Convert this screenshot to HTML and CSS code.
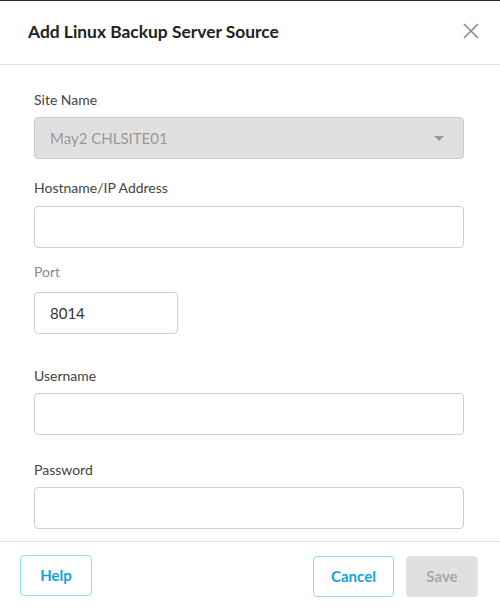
FILE: index.html
```html
<!DOCTYPE html>
<html lang="en">
<head>
  <meta charset="UTF-8" />
  <meta name="viewport" content="width=device-width, initial-scale=1.0" />
  <title>Add Linux Backup Server Source</title>
  <link rel="stylesheet" href="styles.css">
</head>
<body>
  <div class="modal" role="dialog" aria-labelledby="modal-titulo">
    <div class="modal-header">
      <h1 class="modal-titulo" id="modal-titulo">Add Linux Backup Server Source</h1>
      <button class="btn-fechar" aria-label="Close">
        <svg width="16" height="16" viewBox="0 0 16 16" aria-hidden="true">
          <path d="M1 1 L15 15 M15 1 L1 15" stroke="#8a8a8a" stroke-width="1.6" fill="none" />
        </svg>
      </button>
    </div>

    <div class="modal-body">
      <div class="campo">
        <label class="rotulo">Site Name</label>
        <div class="select desativado">
          <span>May2 CHLSITE01</span>
          <span class="seta"></span>
        </div>
      </div>

      <div class="campo campo-host">
        <label class="rotulo">Hostname/IP Address</label>
        <input class="entrada" type="text" />
      </div>

      <div class="campo campo-porta">
        <label class="rotulo rotulo-claro">Port</label>
        <input class="entrada entrada-curta" type="text" value="8014" />
      </div>

      <div class="campo campo-usuario">
        <label class="rotulo">Username</label>
        <input class="entrada" type="text" />
      </div>

      <div class="campo campo-senha">
        <label class="rotulo">Password</label>
        <input class="entrada" type="password" />
      </div>
    </div>

    <div class="modal-footer">
      <button class="botao botao-contorno">Help</button>
      <div class="acoes">
        <button class="botao botao-contorno botao-cancelar">Cancel</button>
        <button class="botao botao-desativado" disabled>Save</button>
      </div>
    </div>
  </div>
</body>
</html>
```

FILE: styles.css
```css
* {
  margin: 0; padding: 0; box-sizing: border-box;
}
body {
  font-family: 'Lato', 'Open Sans', sans-serif;
  color: #444;
  background: #fff;
  width: 500px;
  height: 609px;
  overflow: hidden;
}

.modal {
  border-top: 1px solid #2b2b2b;
  height: 609px;
  display: flex;
  flex-direction: column;
}

.modal-header {
  height: 64px;
  border-bottom: 1px solid #e0e0e0;
  display: flex;
  align-items: center;
  justify-content: space-between;
  padding: 0 21px 2px 28px;
}

.modal-titulo {
  font-size: 17.4px;
  font-weight: 700;
  color: #222;
}

.btn-fechar {
  background: none;
  border: none;
  cursor: pointer;
  width: 16px;
  height: 16px;
  display: block;
  margin-top: -2px;
}
.btn-fechar svg {
  display: block;
}

.modal-body {
  flex: 1;
  padding: 25px 36px 0 34px;
}

.campo-host { margin-top: 19px; }
.campo-porta { margin-top: 14px; }
.campo-usuario { margin-top: 32px; }
.campo-senha { margin-top: 25px; }

.rotulo {
  display: block;
  font-size: 14px;
  line-height: 20px;
  color: #444;
  margin-bottom: 7px;
}
.campo-host .rotulo { margin-bottom: 8px; }
.campo-porta .rotulo { margin-bottom: 10px; }

.rotulo-claro {
  color: #8a8a8a;
}

.entrada,
.select {
  display: block;
  width: 100%;
  height: 42px;
  border: 1px solid #cfcfcf;
  border-radius: 4px;
  padding: 0 15px;
  font-family: inherit;
  font-size: 15px;
  color: #333;
  background: #fff;
  outline: none;
}

.entrada-curta {
  width: 144px;
}

.select {
  display: flex;
  align-items: center;
  justify-content: space-between;
}

.select.desativado {
  background: #e0e0e0;
  border-color: #c9c9c9;
  color: #9a9a9a;
}

.seta {
  width: 0;
  height: 0;
  border-left: 5px solid transparent;
  border-right: 5px solid transparent;
  border-top: 5px solid #9a9a9a;
  margin-right: 4px;
}

.modal-footer {
  height: 68px;
  border-top: 1px solid #e0e0e0;
  display: flex;
  align-items: flex-start;
  justify-content: space-between;
  padding: 13px 22px 0 20px;
}

.acoes {
  display: flex;
  gap: 12px;
}

.botao {
  height: 41px;
  border-radius: 4px;
  font-family: inherit;
  font-size: 15px;
  font-weight: 700;
  padding: 0 16px 2px;
  cursor: pointer;
}

.botao-contorno {
  background: #fff;
  border: 1px solid #8fdcf2;
  color: #0ea5dc;
  min-width: 72px;
}

.botao-cancelar {
  width: 81px;
  margin-top: 1px;
}

.botao-desativado {
  background: #e0e0e0;
  border: 1px solid #e0e0e0;
  color: #a8a8a8;
  min-width: 72px;
  margin-top: 1px;
  cursor: default;
}
```
